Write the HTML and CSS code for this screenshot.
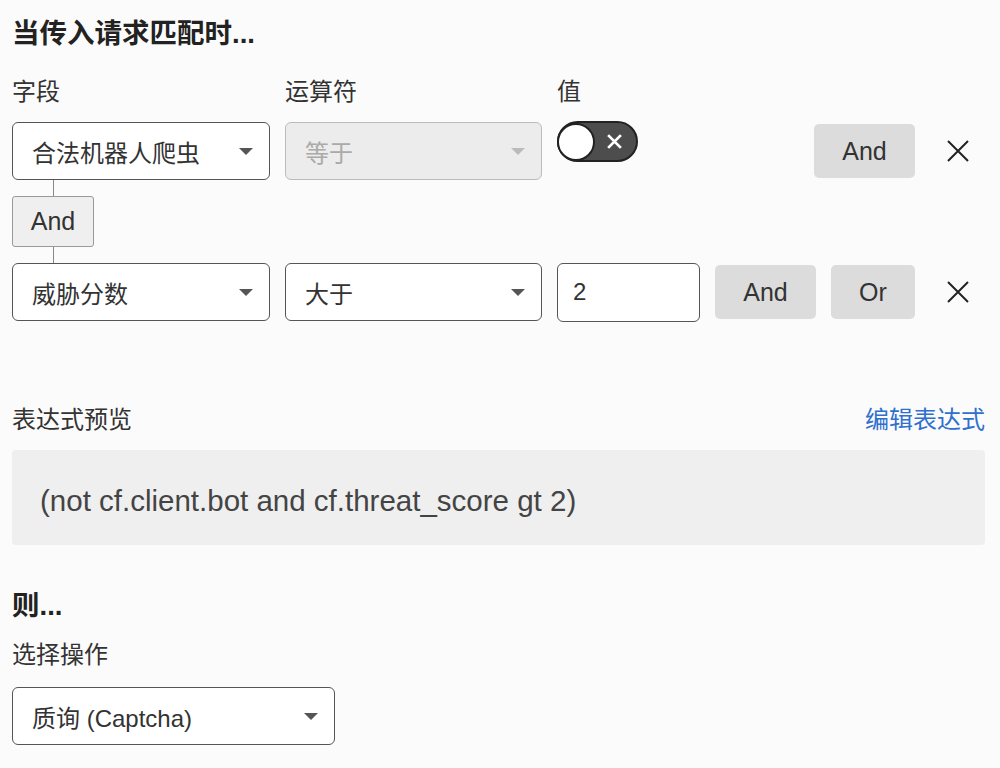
FILE: index.html
```html
<!DOCTYPE html>
<html>
<head>
  <meta charset="utf-8">
  <title>规则编辑</title>
  <link rel="stylesheet" href="styles.css">
</head>
<body>
  <h2 class="section-title title-top">当传入请求匹配时...</h2>

  <div class="labels">
    <span class="col-field">字段</span>
    <span class="col-op">运算符</span>
    <span>值</span>
  </div>

  <div class="row">
    <div class="select col-field">
      <span>合法机器人爬虫</span>
      <span class="caret"></span>
    </div>
    <div class="select col-op disabled">
      <span>等于</span>
      <span class="caret"></span>
    </div>
    <div class="toggle">
      <span class="knob"></span>
      <svg class="toggle-x" width="17" height="17" viewBox="0 0 16 16">
        <path d="M2 2 L14 14 M14 2 L2 14" stroke="#fff" stroke-width="2.6" fill="none"/>
      </svg>
    </div>
    <div class="actions">
      <button class="btn btn-and">And</button>
      <button class="close">
        <svg width="24" height="24" viewBox="0 0 24 24">
          <path d="M2 2 L22 22 M22 2 L2 22" stroke="#222" stroke-width="2" fill="none"/>
        </svg>
      </button>
    </div>
  </div>

  <div class="connector">
    <div class="line"></div>
    <div class="logic">And</div>
    <div class="line"></div>
  </div>

  <div class="row">
    <div class="select col-field">
      <span>威胁分数</span>
      <span class="caret"></span>
    </div>
    <div class="select col-op">
      <span>大于</span>
      <span class="caret"></span>
    </div>
    <div class="input">2</div>
    <div class="actions">
      <button class="btn btn-and">And</button>
      <button class="btn btn-or">Or</button>
      <button class="close">
        <svg width="24" height="24" viewBox="0 0 24 24">
          <path d="M2 2 L22 22 M22 2 L2 22" stroke="#222" stroke-width="2" fill="none"/>
        </svg>
      </button>
    </div>
  </div>

  <div class="preview-head">
    <span>表达式预览</span>
    <a class="edit-link" href="#">编辑表达式</a>
  </div>
  <div class="preview">(not cf.client.bot and cf.threat_score gt 2)</div>

  <h2 class="section-title title-then">则...</h2>
  <div class="label">选择操作</div>
  <div class="select action-select">
    <span>质询 (Captcha)</span>
    <span class="caret"></span>
  </div>
</body>
</html>
```

FILE: styles.css
```css
body {
  margin: 0;
  padding: 16px 15px 0 12px;
  background: #fbfbfb;
  color: #333;
  font-family: "Liberation Sans", "Noto Sans CJK SC", sans-serif;
  font-size: 24px;
}
.section-title {
  margin: 0;
  font-size: 27.5px;
  line-height: 36px;
  font-weight: bold;
  color: #222;
}
.title-top {
  margin-bottom: 25px;
}
.labels {
  display: flex;
  gap: 15px;
  line-height: 30px;
  margin-bottom: 15px;
}
.col-field {
  width: 258px;
  flex: none;
}
.col-op {
  width: 257px;
  flex: none;
}
.row {
  display: flex;
  align-items: center;
  gap: 15px;
  height: 58px;
}
.select {
  box-sizing: border-box;
  height: 58px;
  display: flex;
  align-items: center;
  justify-content: space-between;
  padding: 0 16px 0 19px;
  border: 1.5px solid #555;
  border-radius: 6px;
  background: #fff;
  color: #333;
}
.select.disabled {
  background: #ececec;
  border-color: #bbb;
  color: #aaa;
}
.caret {
  width: 0;
  height: 0;
  border-left: 7px solid transparent;
  border-right: 7px solid transparent;
  border-top: 7px solid #555;
}
.disabled .caret {
  border-top-color: #bbb;
}
.toggle {
  align-self: flex-start;
  margin-top: -1px;
  box-sizing: border-box;
  width: 81px;
  height: 41px;
  border: 2.5px solid #222;
  border-radius: 21px;
  background: #4d4d4d;
  display: flex;
  align-items: center;
  justify-content: space-between;
  padding-right: 13px;
}
.knob {
  box-sizing: border-box;
  width: 38px;
  height: 38px;
  margin-left: -2px;
  border: 2.5px solid #222;
  border-radius: 50%;
  background: #fff;
}
.input {
  box-sizing: border-box;
  width: 143px;
  height: 59px;
  display: flex;
  align-items: center;
  padding-left: 15px;
  border: 1.5px solid #555;
  border-radius: 6px;
  background: #fff;
}
.actions {
  margin-left: auto;
  display: flex;
  align-items: center;
  gap: 15px;
}
.btn {
  height: 54px;
  border: none;
  border-radius: 5px;
  background: #dcdcdc;
  color: #333;
  font-family: "Liberation Sans", sans-serif;
  font-size: 25px;
  padding: 0;
}
.btn-and {
  width: 101px;
}
.btn-or {
  width: 84px;
}
.close {
  width: 55px;
  height: 40px;
  border: none;
  background: none;
  padding: 0;
  display: flex;
  align-items: center;
  justify-content: center;
}
.connector {
  display: flex;
  flex-direction: column;
}
.line {
  width: 1px;
  height: 16px;
  margin-left: 41px;
  background: #888;
}
.logic {
  box-sizing: border-box;
  width: 82px;
  height: 51px;
  display: flex;
  align-items: center;
  justify-content: center;
  border: 1px solid #999;
  border-radius: 3px;
  background: #efefef;
  color: #333;
  font-size: 25px;
}
.preview-head {
  display: flex;
  justify-content: space-between;
  line-height: 30px;
  margin-top: 84px;
  margin-bottom: 15px;
}
.edit-link {
  color: #2f6fce;
  text-decoration: none;
}
.preview {
  height: 95px;
  box-sizing: border-box;
  display: flex;
  align-items: center;
  padding: 6px 0 0 28px;
  border-radius: 4px;
  background: #efefef;
  color: #444;
  font-size: 29.5px;
}
.title-then {
  margin-top: 43px;
  margin-bottom: 16px;
}
.label {
  line-height: 30px;
  margin-bottom: 17px;
}
.action-select {
  width: 323px;
}
```
